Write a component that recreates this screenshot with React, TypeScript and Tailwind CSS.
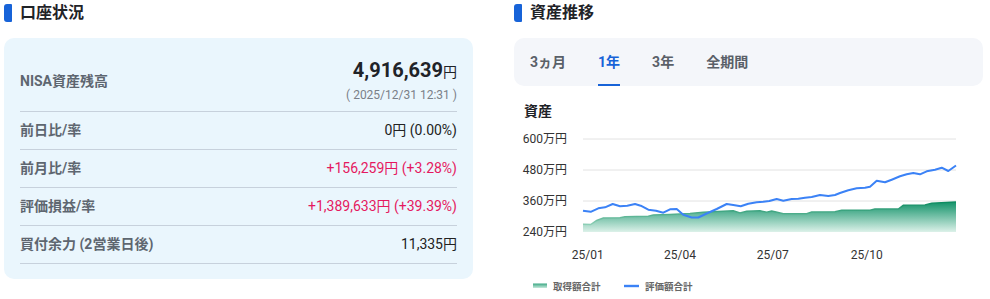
import React from "react";

const FONT = { fontFamily: "Roboto, 'Noto Sans CJK JP', sans-serif" };

const blue =
  "583,211.7 590.7,212.8 598.3,209.3 605,208.3 612.7,205 620,207.3 627.3,206.7 635,205 640.7,206.7 648.3,210.7 656,211.7 663.3,213.7 670,210.3 676.7,210 683.3,215.7 691.7,218.5 698.3,218.5 706.7,214.5 716.7,210 726.7,205 733.3,206 740.7,207.3 748.3,204.7 756.7,203.3 763.3,202.7 769.3,202 776.7,200 783.3,201.7 791.7,200 798.3,199.7 805,198.7 811.7,198 820,196 828.3,197 835,196 840,194 848.3,191.3 856.7,189.3 865,188.7 870,187.7 876.7,181.7 885,183.3 891.7,180.7 900,177.3 906.7,175.3 913.3,174 920,175.3 926.7,172.3 935,170.7 941.7,168.7 948.3,172 956,166.5";

const green =
  "583,225.3 590.7,225.5 596.7,221.5 603.3,219 620,218.7 625,217.7 648.3,217.3 653.3,216 670,215.5 690,214.5 703.3,213.3 733.3,211.7 740,214 746.7,212.3 760,211.7 766.7,213.3 771.7,212 776,213 783.3,214.7 806.7,214.7 811.7,213 835,212.7 841.7,211.3 870,211.3 875,210 898.3,210 903.3,206.3 925,206 931.7,204.3 956,203";

function Title({ text }: { text: string }) {
  return (
    <div className="flex items-center gap-[8px] pt-[3px] h-[22px]">
      <div className="w-[8px] h-[18px] bg-[#1763d8] rounded-l-[3px] rounded-r-[1px]" />
      <div className="text-[16px] font-bold text-[#1f2328] leading-[18px]">{text}</div>
    </div>
  );
}

function Row({ label, value, red }: { label: string; value: string; red?: boolean }) {
  return (
    <div className="flex items-center justify-between h-[38px] border-b border-[#c7d1dc]">
      <div className="text-[14px] font-bold text-[#5e6670]">{label}</div>
      <div className={`text-[14px] ${red ? "text-[#e5195f]" : "text-[#222222]"}`}>{value}</div>
    </div>
  );
}

function Chart() {
  const grid = [140, 171, 202];
  const yl = [
    { y: 140, t: "600万円" },
    { y: 171, t: "480万円" },
    { y: 202, t: "360万円" },
    { y: 233, t: "240万円" },
  ];
  const xl = [
    { x: 587.7, t: "25/01" },
    { x: 680, t: "25/04" },
    { x: 772.7, t: "25/07" },
    { x: 866.7, t: "25/10" },
  ];
  return (
    <svg width="469" height="177" viewBox="514 122 469 177" className="block" style={FONT}>
      <defs>
        <linearGradient id="ga" gradientUnits="userSpaceOnUse" x1="0" y1="203" x2="0" y2="233">
          <stop offset="0" stopColor="#14936a" />
          <stop offset="1" stopColor="#dcf1e9" />
        </linearGradient>
        <linearGradient id="gs" gradientUnits="userSpaceOnUse" x1="0" y1="203" x2="0" y2="226">
          <stop offset="0" stopColor="#0b8a5f" />
          <stop offset="1" stopColor="#8fd0b7" />
        </linearGradient>
        <linearGradient id="gl" x1="0" y1="0" x2="0" y2="1">
          <stop offset="0" stopColor="#3aa783" />
          <stop offset="1" stopColor="#c7e9dc" />
        </linearGradient>
      </defs>
      {grid.map((y) => (
        <line key={y} x1="583" x2="956" y1={y} y2={y} stroke="#e2e2e2" strokeWidth="1" />
      ))}
      <polygon points={`${green} 956,233 583,233`} fill="url(#ga)" />
      <polyline points={green} fill="none" stroke="url(#gs)" strokeWidth="1.5" />
      <polyline points={blue} fill="none" stroke="#3b82f6" strokeWidth="2" strokeLinejoin="round" />
      {yl.map((l) => (
        <text key={l.t} x="567" y={l.y + 4.2} textAnchor="end" fontSize="12" fill="#333333">
          {l.t}
        </text>
      ))}
      {xl.map((l) => (
        <text key={l.t} x={l.x} y="260.3" textAnchor="middle" fontSize="12" fill="#333333">
          {l.t}
        </text>
      ))}
      <rect x="533" y="284.5" width="14" height="4.5" fill="url(#gl)" />
      <text x="553" y="290.5" fontSize="9.5" fontWeight="700" fill="#666666">
        取得額合計
      </text>
      <rect x="624" y="285.8" width="15" height="2.4" fill="#3b82f6" />
      <text x="645" y="290.5" fontSize="9.5" fontWeight="700" fill="#666666">
        評価額合計
      </text>
    </svg>
  );
}

export default function App() {
  return (
    <div className="w-[990px] h-[299px] bg-white flex gap-[41px] px-[4px]" style={FONT}>
      <div className="w-[469px] flex flex-col">
        <Title text="口座状況" />
        <div className="mt-[16px] bg-[#eaf6fd] rounded-[10px] px-[16px] pt-[20px] pb-[15px]">
          <div className="flex items-center justify-between pb-[7px] border-b border-[#c7d1dc]">
            <div className="text-[14px] font-bold text-[#5e6670]">NISA資産残高</div>
            <div className="flex flex-col items-end">
              <div className="leading-[24px] text-[#1f2328]">
                <span className="text-[20px] font-bold">4,916,639</span>
                <span className="text-[14px]">円</span>
              </div>
              <div className="text-[12px] leading-[18px] mt-[2px] text-[#7a8088]">( 2025/12/31 12:31 )</div>
            </div>
          </div>
          <Row label="前日比/率" value="0円 (0.00%)" />
          <Row label="前月比/率" value="+156,259円 (+3.28%)" red />
          <Row label="評価損益/率" value="+1,389,633円 (+39.39%)" red />
          <Row label="買付余力 (2営業日後)" value="11,335円" />
        </div>
      </div>
      <div className="w-[469px] flex flex-col">
        <Title text="資産推移" />
        <div className="mt-[16px] h-[48px] bg-[#f4f6fa] rounded-[10px] flex items-stretch gap-[32px] pl-[16px]">
          <div className="flex items-center text-[14px] font-bold text-[#5a6068]">3ヵ月</div>
          <div className="relative flex items-center text-[14px] font-bold text-[#1763d8]">
            1年
            <div className="absolute left-0 right-0 bottom-0 h-[2px] bg-[#1763d8]" />
          </div>
          <div className="flex items-center text-[14px] font-bold text-[#5a6068]">3年</div>
          <div className="flex items-center text-[14px] font-bold text-[#5a6068]">全期間</div>
        </div>
        <div className="mt-[15px] pl-[10px] text-[14px] font-bold leading-[20px] text-[#1f2328]">資産</div>
        <Chart />
      </div>
    </div>
  );
}
